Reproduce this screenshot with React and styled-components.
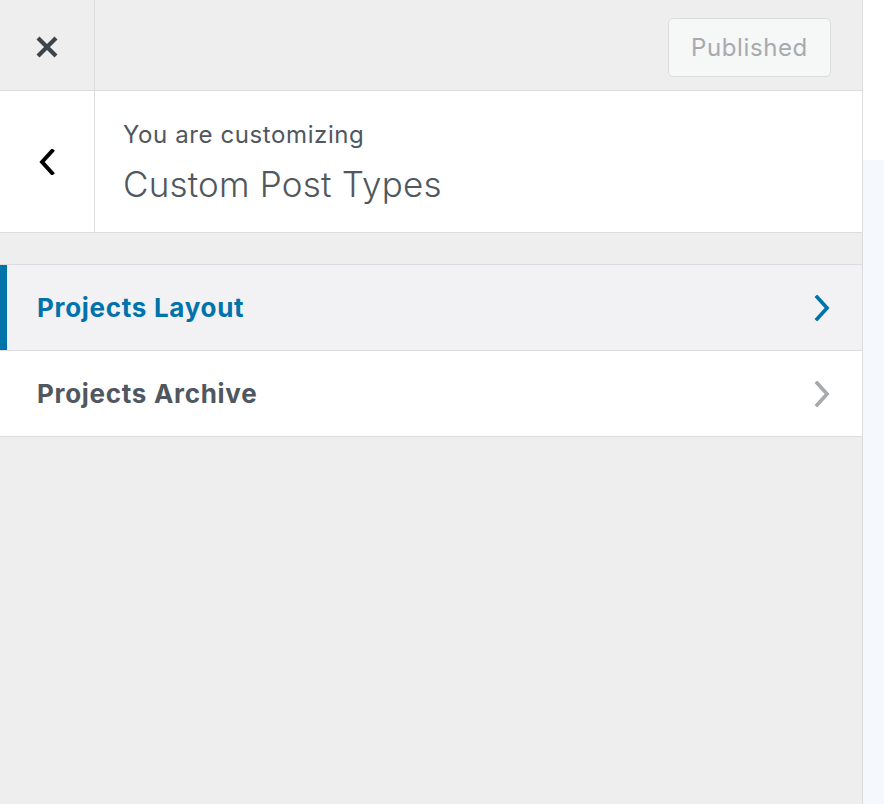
import React from 'react';
import styled, { createGlobalStyle } from 'styled-components';

const GlobalStyle = createGlobalStyle`
  html, body {
    margin: 0;
    padding: 0;
    background: #fff;
  }
  body {
    font-family: Inter, "Noto Sans", "Liberation Sans", sans-serif;
  }
`;

const Page = styled.div`
  display: flex;
  height: 804px;
  overflow: hidden;
`;

const Sidebar = styled.div`
  width: 862px;
  flex-shrink: 0;
  background: #eeeeee;
  border-right: 1px solid #dcdcde;
  display: flex;
  flex-direction: column;
`;

const Preview = styled.div`
  flex: 1;
  display: flex;
  flex-direction: column;
  background: #fff;
`;

const PreviewBody = styled.div`
  margin-top: 160px;
  flex: 1;
  background: #f5f9fd;
`;

const Header = styled.div`
  height: 86px;
  padding-top: 4px;
  display: flex;
  align-items: center;
  border-bottom: 1px solid #dcdcde;
`;

const IconColumn = styled.div`
  width: 95px;
  align-self: stretch;
  flex-shrink: 0;
  display: flex;
  align-items: center;
  justify-content: center;
  border-right: 1px solid #dcdcde;
  box-sizing: border-box;
  margin-top: ${(p) => (p.$top ? '-4px' : '0')};
  padding-top: ${(p) => (p.$top ? '4px' : '0')};
`;

const HeaderSpacer = styled.div`
  flex: 1;
`;

const PublishedButton = styled.button`
  width: 163px;
  height: 59px;
  margin-right: 31px;
  border: 1px solid #dcdcde;
  border-radius: 5px;
  background: #f6f7f7;
  color: #a7aaad;
  font-family: Inter, "Noto Sans", sans-serif;
  font-size: 24px;
  letter-spacing: 0.6px;
  cursor: default;
`;

const Info = styled.div`
  height: 141px;
  display: flex;
  background: #fff;
  border-bottom: 1px solid #dcdcde;
`;

const InfoText = styled.div`
  padding-left: 28px;
  padding-top: 2px;
  display: flex;
  flex-direction: column;
  justify-content: center;
  color: #50575e;
`;

const Caption = styled.div`
  font-size: 24px;
  line-height: 30px;
  letter-spacing: 0.6px;
`;

const Title = styled.div`
  font-size: 35px;
  font-weight: 300;
  line-height: 44px;
  letter-spacing: 0.2px;
  margin-top: 12px;
`;

const Sections = styled.ul`
  list-style: none;
  margin: 31px 0 0;
  padding: 0;
  border-top: 1px solid #dcdcde;
`;

const Section = styled.li`
  height: 85px;
  display: flex;
  align-items: center;
  justify-content: space-between;
  padding: 0 31px 0 37px;
  border-bottom: 1px solid #dcdcde;
  background: ${(p) => (p.$active ? '#f2f2f5' : '#fff')};
  box-shadow: ${(p) => (p.$active ? 'inset 7px 0 0 #0073aa' : 'none')};
  color: ${(p) => (p.$active ? '#0073aa' : '#50575e')};
  font-size: 26px;
  font-weight: 700;
  letter-spacing: 0.7px;
`;

function CloseIcon() {
  return (
    <svg width="24" height="24" viewBox="0 0 24 24">
      <path d="M3 3 L21 21 M21 3 L3 21" stroke="#3c434a" strokeWidth="4.2" fill="none" />
    </svg>
  );
}

function Chevron({ dir = 'right', color, size = 26, weight = 3.6 }) {
  const d = dir === 'right' ? 'M4 2 L14 13 L4 24' : 'M14 2 L4 13 L14 24';
  return (
    <svg width={size * 0.7} height={size} viewBox="0 0 18 26">
      <path d={d} stroke={color} strokeWidth={weight} fill="none" strokeLinecap="square" />
    </svg>
  );
}

const sections = [
  { id: 'layout', label: 'Projects Layout', active: true },
  { id: 'archive', label: 'Projects Archive', active: false },
];

function App() {
  return (
    <>
      <GlobalStyle />
      <Page>
        <Sidebar>
          <Header>
            <IconColumn $top>
              <CloseIcon />
            </IconColumn>
            <HeaderSpacer />
            <PublishedButton disabled>Published</PublishedButton>
          </Header>

          <Info>
            <IconColumn>
              <Chevron dir="left" color="#000" size={26} weight={4} />
            </IconColumn>
            <InfoText>
              <Caption>You are customizing</Caption>
              <Title>Custom Post Types</Title>
            </InfoText>
          </Info>

          <Sections>
            {sections.map((s) => (
              <Section key={s.id} $active={s.active}>
                {s.label}
                <Chevron color={s.active ? '#0073aa' : '#a7aaad'} size={26} />
              </Section>
            ))}
          </Sections>
        </Sidebar>
        <Preview>
          <PreviewBody />
        </Preview>
      </Page>
    </>
  );
}

export default App;
